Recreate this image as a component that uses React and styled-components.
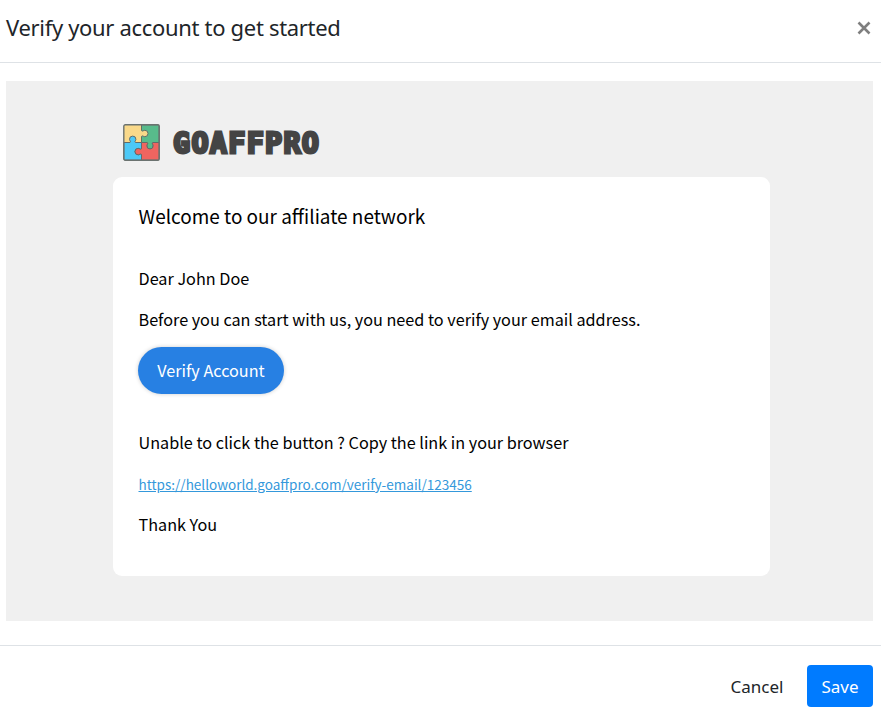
import React from 'react';
import styled, { createGlobalStyle } from 'styled-components';

const GlobalStyle = createGlobalStyle`
  * { box-sizing: border-box; }
  body { margin: 0; background: #fff; }
`;

const Dialog = styled.section`
  display: flex;
  flex-direction: column;
  height: 716px;
  font-family: "Noto Sans", "Open Sans", sans-serif;
  color: #212529;
  overflow: hidden;
`;

const Header = styled.header`
  display: flex;
  justify-content: space-between;
  align-items: flex-start;
  height: 63px;
  padding: 11px 10px 0 6px;
  border-bottom: 1px solid #dee2e6;
`;

const Title = styled.h5`
  margin: 0;
  font-size: 22px;
  font-weight: 400;
  line-height: 32px;
  letter-spacing: -0.32px;
  white-space: nowrap;
`;

const CloseButton = styled.button`
  display: flex;
  margin: 10px 0 0;
  padding: 0;
  border: 0;
  background: none;
  color: #7f7f7f;
`;

const Body = styled.main`
  flex: 1;
  padding: 18px 8px 24px 6px;
`;

const EmailPreview = styled.div`
  height: 540px;
  padding: 43px 103px 45px 107px;
  background: #f0f0f0;
  font-family: "Noto Sans CJK SC", sans-serif;
  color: #000;
`;

const Brand = styled.div`
  display: flex;
  align-items: center;
  height: 37px;
  margin: 0 0 16px 10px;
`;

const Wordmark = styled.span`
  margin-left: 13px;
  padding-top: 2px;
  font-family: "DejaVu Sans Mono", monospace;
  font-size: 28.5px;
  font-weight: 700;
  line-height: 37px;
  letter-spacing: 1.25px;
  color: #444;
  -webkit-text-stroke: 2.8px #444;
  white-space: nowrap;
`;

const Card = styled.article`
  height: 399px;
  padding: 24px 25px 0 25.5px;
  background: #fff;
  border-radius: 9px;
`;

const CardTitle = styled.h1`
  margin: 0 0 35px;
  font-size: 18.97px;
  font-weight: 400;
  line-height: 30px;
`;

const Line = styled.p`
  margin: 0 0 ${(p) => p.$gap}px;
  font-size: 16.22px;
  line-height: 24px;
  height: 24px;
  white-space: nowrap;
`;

const VerifyButton = styled.button`
  display: flex;
  align-items: center;
  justify-content: center;
  width: 146px;
  height: 47px;
  margin: 0 0 36px -0.5px;
  padding: 0 0 2px;
  border: 0;
  border-radius: 24px;
  background: #2780e3;
  box-shadow: 0 0 4px rgba(0, 0, 0, 0.2);
  font: inherit;
  font-size: 16.2px;
  color: #fff;
`;

const Link = styled.a`
  font-size: 13.52px;
  color: #3498db;
  text-decoration: underline;
`;

const Footer = styled.footer`
  display: flex;
  justify-content: flex-end;
  height: 71px;
  padding: 19px 8px 0 0;
  border-top: 1px solid #dee2e6;
`;

const FooterButton = styled.button`
  width: ${(p) => p.$width}px;
  height: 42px;
  margin-left: 8px;
  padding: 0;
  border: 0;
  border-radius: 4px;
  background: ${(p) => (p.$primary ? '#007bff' : 'transparent')};
  color: ${(p) => (p.$primary ? '#fff' : '#212529')};
  font: inherit;
  font-size: 17px;
`;

const PuzzleLogo = () => (
  <svg width="37" height="37" viewBox="0 0 37 37">
    <rect x="0.8" y="0.8" width="35.4" height="35.4" rx="1.5" fill="#f9d98a" />
    <g stroke="#626c6a" strokeWidth="1" strokeLinejoin="round">
      <path fill="#58bb8b" d="M18.5.8H34.7a1.5 1.5 0 0 1 1.5 1.5V18.5H29.8c-1.2 1 .4 2 .4 3.3a3.2 3.2 0 0 1-6.4 0c0-1.3 1.6-2.3.4-3.3H18.5V12.4c.9-1.3 2 .3 3.3.3a3.2 3.2 0 0 0 0-6.4c-1.3 0-2.4 1.6-3.3.3z" />
      <path fill="#4cc9f7" d="M.8 18.5H7c1.2-1-.5-1.9-.5-3.2a3.2 3.2 0 0 1 6.4 0c0 1.3-1.7 2.2-.5 3.2H18.5V24.8c-1 1.2-2-.4-3.3-.4a3.2 3.2 0 0 0 0 6.4c1.3 0 2.3-1.6 3.3-.4V36.2H2.3A1.5 1.5 0 0 1 .8 34.7z" />
      <path fill="#ef6560" d="M18.5 18.5H24.2c1.2 1-.4 2-.4 3.3a3.2 3.2 0 0 0 6.4 0c0-1.3-1.6-2.3-.4-3.3H36.2V34.7a1.5 1.5 0 0 1-1.5 1.5H18.5V30.4c-1-1.2-2 .4-3.3.4a3.2 3.2 0 0 1 0-6.4c1.3 0 2.3 1.6 3.3.4z" />
    </g>
    <rect x="0.8" y="0.8" width="35.4" height="35.4" rx="1.5" fill="none" stroke="#6b7370" strokeWidth="1.4" />
  </svg>
);

const CloseIcon = () => (
  <svg width="14" height="14" viewBox="0 0 14 14">
    <path d="M1.5 1.5L12.5 12.5M12.5 1.5L1.5 12.5" stroke="currentColor" strokeWidth="2.6" />
  </svg>
);

export default function App() {
  return (
    <>
      <GlobalStyle />
      <Dialog>
        <Header>
          <Title>Verify your account to get started</Title>
          <CloseButton aria-label="Close"><CloseIcon /></CloseButton>
        </Header>
        <Body>
          <EmailPreview>
            <Brand>
              <PuzzleLogo />
              <Wordmark>GOAFFPRO</Wordmark>
            </Brand>
            <Card>
              <CardTitle>Welcome to our affiliate network</CardTitle>
              <Line $gap={17}>Dear John Doe</Line>
              <Line $gap={16}>Before you can start with us, you need to verify your email address.</Line>
              <VerifyButton>Verify Account</VerifyButton>
              <Line $gap={17}>Unable to click the button ? Copy the link in your browser</Line>
              <Line $gap={17}><Link>https://helloworld.goaffpro.com/verify-email/123456</Link></Line>
              <Line $gap={0}>Thank You</Line>
            </Card>
          </EmailPreview>
        </Body>
        <Footer>
          <FooterButton $width={84}>Cancel</FooterButton>
          <FooterButton $width={66} $primary>Save</FooterButton>
        </Footer>
      </Dialog>
    </>
  );
}
